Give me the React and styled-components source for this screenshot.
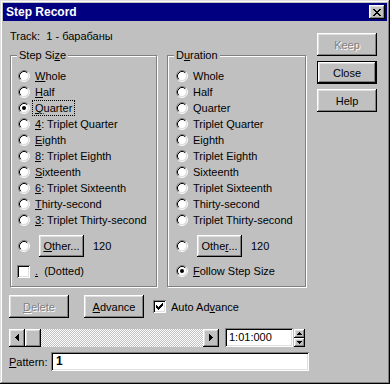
import React from 'react';
import styled, { createGlobalStyle, css } from 'styled-components';

const GlobalStyle = createGlobalStyle`
  html, body {
    margin: 0;
    padding: 0;
    background: #c0c0c0;
  }
  body {
    font-family: "Liberation Sans", Arial, sans-serif;
    font-size: 11px;
    color: #000;
  }
`;

const raised = css`
  background: #c0c0c0;
  box-shadow: inset -1px -1px #000, inset 1px 1px #fff, inset -2px -2px #808080,
    inset 2px 2px #dfdfdf;
`;

const sunken = css`
  background: #fff;
  box-shadow: inset 1px 1px #808080, inset -1px -1px #fff, inset 2px 2px #000,
    inset -2px -2px #dfdfdf;
`;

const Window = styled.div`
  width: 390px;
  height: 384px;
  box-sizing: border-box;
  padding: 3px;
  background: #c0c0c0;
  box-shadow: inset -1px -1px #000, inset 1px 1px #dfdfdf, inset -2px -2px #808080,
    inset 2px 2px #fff;
  display: flex;
  flex-direction: column;
`;

const TitleBar = styled.div`
  height: 18px;
  flex: none;
  background: #000080;
  color: #fff;
  display: flex;
  align-items: center;
  justify-content: space-between;
  padding: 0 2px 0 3px;
  font-weight: bold;
  font-size: 12px;
`;

const TitleButton = styled.div`
  width: 16px;
  height: 14px;
  ${raised};
  display: flex;
  align-items: center;
  justify-content: center;
`;

const Body = styled.div`
  display: grid;
  grid-template-columns: 300px 60px;
  column-gap: 8px;
  padding: 8px 0 0 6px;
`;

const Main = styled.div`
  display: flex;
  flex-direction: column;
`;

const Side = styled.div`
  display: flex;
  flex-direction: column;
  gap: 5px;
  padding-top: 4px;
`;

const TrackLine = styled.div`
  height: 14px;
  line-height: 14px;
  padding-left: 1px;
`;

const GroupsRow = styled.div`
  display: flex;
  gap: 10px;
  margin-top: 12px;
  padding-left: 1px;
`;

const GroupBox = styled.div`
  position: relative;
  box-sizing: border-box;
  width: ${(p) => p.$width}px;
  border: 1px solid #808080;
  box-shadow: inset 1px 1px #fff, 1px 1px #fff;
  padding: 12px 0 7px ${(p) => p.$inset}px;
`;

const Legend = styled.span`
  position: absolute;
  top: -7px;
  left: 6px;
  padding: 0 2px;
  line-height: 13px;
  background: #c0c0c0;
`;

const OptionRow = styled.div`
  display: flex;
  align-items: center;
  height: ${(p) => p.$h || 16}px;
  margin-top: ${(p) => p.$gap || 0}px;
`;

const OptionLabel = styled.span`
  margin-left: 3px;
  padding: 0 2px;
  line-height: 14px;
  white-space: nowrap;
  outline: ${(p) => (p.$focus ? '1px dotted #000' : 'none')};
`;

const Button = styled.div`
  box-sizing: border-box;
  width: ${(p) => p.$w || 60}px;
  height: ${(p) => p.$h || 23}px;
  flex: none;
  display: flex;
  align-items: center;
  justify-content: center;
  ${raised};
  color: ${(p) => (p.$disabled ? '#808080' : '#000')};
  text-shadow: ${(p) => (p.$disabled ? '1px 1px 0 #fff' : 'none')};
  ${(p) =>
    p.$default &&
    css`
      box-shadow: inset 0 0 0 1px #000, inset -2px -2px #000, inset 2px 2px #fff,
        inset -3px -3px #808080, inset 3px 3px #dfdfdf;
    `}
`;

const Value = styled.span`
  margin-left: 9px;
`;

const CheckBox = styled.div`
  width: 13px;
  height: 13px;
  flex: none;
  box-sizing: border-box;
  ${sunken};
  display: flex;
  align-items: center;
  justify-content: center;
  margin-left: ${(p) => p.$shift || 0}px;
`;

const ActionRow = styled.div`
  display: flex;
  align-items: center;
  height: 23px;
  margin-top: 8px;
`;

const Spacer = styled.div`
  width: ${(p) => p.$w}px;
  flex: none;
`;

const ScrollRow = styled.div`
  display: flex;
  align-items: center;
  height: 19px;
  margin-top: 10px;
`;

const ScrollBar = styled.div`
  width: 210px;
  height: 18px;
  display: flex;
`;

const ScrollButton = styled.div`
  width: 16px;
  height: 18px;
  flex: none;
  box-sizing: border-box;
  ${raised};
  display: flex;
  align-items: center;
  justify-content: center;
`;

const ScrollTrack = styled.div`
  flex: 1;
  background: repeating-conic-gradient(#c0c0c0 0 25%, #fff 0 50%) 0 0 / 2px 2px;
`;

const TextField = styled.div`
  box-sizing: border-box;
  width: ${(p) => p.$w}px;
  height: 19px;
  ${sunken};
  padding-left: ${(p) => p.$pad || 4}px;
  line-height: 19px;
  font-weight: ${(p) => (p.$bold ? 'bold' : 'normal')};
  font-size: ${(p) => (p.$bold ? 12 : 11)}px;
`;

const Spin = styled.div`
  width: 11px;
  height: 18px;
  margin-left: 1px;
  display: flex;
  flex-direction: column;
`;

const SpinHalf = styled.div`
  flex: 1;
  box-sizing: border-box;
  ${raised};
  display: flex;
  align-items: center;
  justify-content: center;
`;

const PatternRow = styled.div`
  display: flex;
  align-items: center;
  height: 19px;
  margin-top: 5px;
`;

const PatternLabel = styled.span`
  width: 42px;
  flex: none;
`;

const Pixel = styled.svg`
  display: block;
  shape-rendering: crispEdges;
`;

const CloseGlyph = () => (
  <Pixel width="8" height="7" viewBox="0 0 8 7">
    <path
      d="M0 0h2v1h-2z M6 0h2v1h-2z M1 1h2v1h-2z M5 1h2v1h-2z M2 2h4v1h-4z M3 3h2v1h-2z M2 4h4v1h-4z M1 5h2v1h-2z M5 5h2v1h-2z M0 6h2v1h-2z M6 6h2v1h-2z"
      fill="#000"
    />
  </Pixel>
);

const CheckGlyph = () => (
  <Pixel width="7" height="7" viewBox="0 0 7 7">
    <path
      d="M6 0h1v1h-1z M5 1h2v1h-2z M0 2h1v1h-1z M4 2h3v1h-3z M0 3h2v1h-2z M3 3h3v1h-3z M0 4h5v1h-5z M1 5h3v1h-3z M2 6h1v1h-1z"
      fill="#000"
    />
  </Pixel>
);

const ArrowGlyph = ({ dir }) => (
  <Pixel width="4" height="7" viewBox="0 0 4 7" style={dir === 'right' ? { transform: 'scaleX(-1)' } : undefined}>
    <path d="M0 3h1v1h-1z M1 2h1v3h-1z M2 1h1v5h-1z M3 0h1v7h-1z" fill="#000" />
  </Pixel>
);

const SpinGlyph = ({ dir }) => (
  <Pixel width="5" height="3" viewBox="0 0 5 3" style={dir === 'down' ? { transform: 'scaleY(-1)' } : undefined}>
    <path d="M2 0h1v1h-1z M1 1h3v1h-3z M0 2h5v1h-5z" fill="#000" />
  </Pixel>
);

const Radio = ({ checked }) => (
  <svg width="12" height="12" viewBox="0 0 12 12" style={{ display: 'block', flex: 'none' }}>
    <circle cx="6" cy="6" r="4.5" fill="#fff" />
    <path d="M2.11 9.89 A5.5 5.5 0 0 1 9.89 2.11" stroke="#808080" fill="none" />
    <path d="M9.89 2.11 A5.5 5.5 0 0 1 2.11 9.89" stroke="#fff" fill="none" />
    <path d="M2.82 9.18 A4.5 4.5 0 0 1 9.18 2.82" stroke="#000" fill="none" />
    <path d="M9.18 2.82 A4.5 4.5 0 0 1 2.82 9.18" stroke="#dfdfdf" fill="none" />
    {checked && <circle cx="6" cy="6" r="2" fill="#000" />}
  </svg>
);

const stepSizes = [
  [<u>W</u>, 'hole'],
  [<u>H</u>, 'alf'],
  [<u>Q</u>, 'uarter'],
  [<u>4</u>, ': Triplet Quarter'],
  [<u>E</u>, 'ighth'],
  [<u>8</u>, ': Triplet Eighth'],
  [<u>S</u>, 'ixteenth'],
  [<u>6</u>, ': Triplet Sixteenth'],
  [<u>T</u>, 'hirty-second'],
  [<u>3</u>, ': Triplet Thirty-second'],
];

const durations = [
  'Whole',
  'Half',
  'Quarter',
  'Triplet Quarter',
  'Eighth',
  'Triplet Eighth',
  'Sixteenth',
  'Triplet Sixteenth',
  'Thirty-second',
  'Triplet Thirty-second',
];

const Option = ({ checked, focus, children }) => (
  <OptionRow>
    <Radio checked={checked} />
    <OptionLabel $focus={focus}>{children}</OptionLabel>
  </OptionRow>
);

const App = () => (
  <>
    <GlobalStyle />
    <Window>
      <TitleBar>
        <span>Step Record</span>
        <TitleButton>
          <CloseGlyph />
        </TitleButton>
      </TitleBar>
      <Body>
        <Main>
          <TrackLine>Track:&nbsp; 1 - барабаны</TrackLine>
          <GroupsRow>
            <GroupBox $width={147} $inset={7}>
              <Legend>
                Step Si<u>z</u>e
              </Legend>
              {stepSizes.map(([key, rest], i) => (
                <Option key={i} checked={i === 2} focus={i === 2}>
                  {key}
                  {rest}
                </Option>
              ))}
              <OptionRow $h={22} $gap={7}>
                <Radio />
                <Spacer $w={9} />
                <Button $w={45} $h={22}>
                  <span>
                    <u>O</u>ther...
                  </span>
                </Button>
                <Value>120</Value>
              </OptionRow>
              <OptionRow $gap={6}>
                <CheckBox $shift={-1} />
                <OptionLabel>
                  <u>.</u>&nbsp; (Dotted)
                </OptionLabel>
              </OptionRow>
            </GroupBox>
            <GroupBox $width={139} $inset={8}>
              <Legend>
                D<u>u</u>ration
              </Legend>
              {durations.map((d) => (
                <Option key={d}>{d}</Option>
              ))}
              <OptionRow $h={22} $gap={7}>
                <Radio />
                <Spacer $w={9} />
                <Button $w={45} $h={22}>
                  <span>
                    Othe<u>r</u>...
                  </span>
                </Button>
                <Value>120</Value>
              </OptionRow>
              <OptionRow $gap={6}>
                <Radio checked />
                <OptionLabel>
                  <u>F</u>ollow Step Size
                </OptionLabel>
              </OptionRow>
            </GroupBox>
          </GroupsRow>
          <ActionRow>
            <Button $disabled>
              <span>
                <u>D</u>elete
              </span>
            </Button>
            <Spacer $w={15} />
            <Button>
              <span>
                <u>A</u>dvance
              </span>
            </Button>
            <Spacer $w={9} />
            <CheckBox>
              <CheckGlyph />
            </CheckBox>
            <OptionLabel>
              Auto Ad<u>v</u>ance
            </OptionLabel>
          </ActionRow>
          <ScrollRow>
            <ScrollBar>
              <ScrollButton>
                <ArrowGlyph dir="left" />
              </ScrollButton>
              <ScrollButton />
              <ScrollTrack />
              <ScrollButton>
                <ArrowGlyph dir="right" />
              </ScrollButton>
            </ScrollBar>
            <Spacer $w={6} />
            <TextField $w={68}>1:01:000</TextField>
            <Spin>
              <SpinHalf>
                <SpinGlyph dir="up" />
              </SpinHalf>
              <SpinHalf>
                <SpinGlyph dir="down" />
              </SpinHalf>
            </Spin>
          </ScrollRow>
          <PatternRow>
            <PatternLabel>
              <u>P</u>attern:
            </PatternLabel>
            <TextField $w={258} $pad={5} $bold>
              1
            </TextField>
          </PatternRow>
        </Main>
        <Side>
          <Button $disabled>Keep</Button>
          <Button $default>Close</Button>
          <Button>Help</Button>
        </Side>
      </Body>
    </Window>
  </>
);

export default App;
